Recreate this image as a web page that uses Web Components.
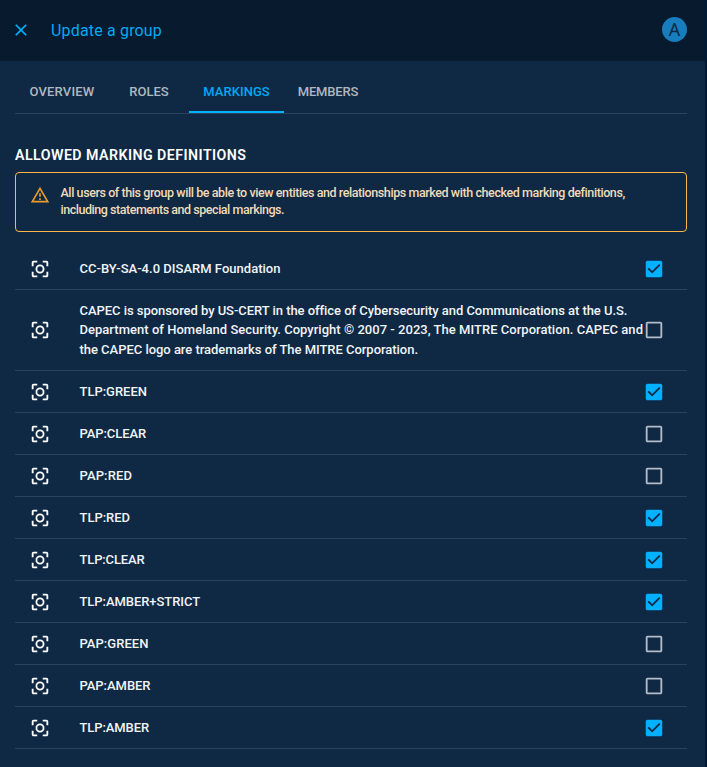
<!DOCTYPE html>
<html lang="en">
<head>
<meta charset="utf-8">
<title>Update a group</title>
<style>
html, body { margin: 0; height: 100%; overflow: hidden; background: #001a35; font-family: Roboto, "Noto Sans", sans-serif; }
</style>
</head>
<body>
<group-drawer></group-drawer>
<script>
const define = (name, html, setup) => customElements.define(name, class extends HTMLElement {
  connectedCallback() {
    if (this.shadowRoot) return;
    const root = this.attachShadow({ mode: 'open' });
    const template = document.createElement('template');
    template.innerHTML = html;
    root.append(template.content.cloneNode(true));
    if (setup) setup(this, root);
  }
});

// A single line of text whose tracking is set so that it fills its measure.
define('tracked-text', `<style>
  :host { display: block; white-space: nowrap; width: max-content; }
  span { display: inline-block; white-space: pre; }
</style><span></span>`, (host, root) => {
  const span = root.querySelector('span');
  span.textContent = host.getAttribute('text');
  const gap = Number(host.getAttribute('measure')) - span.getBoundingClientRect().width;
  span.style.letterSpacing = (gap / span.textContent.length) + 'px';
});

define('close-icon', `<style>:host { display: block; } svg { display: block; }</style>
<svg width="20" height="20" viewBox="0 0 24 24" fill="#00b1ff"><path d="M19 6.41 17.59 5 12 10.59 6.41 5 5 6.41 10.59 12 5 17.59 6.41 19 12 13.41 17.59 19 19 17.59 13.41 12z"/></svg>`);

define('warning-icon', `<style>:host { display: block; } svg { display: block; }</style>
<svg width="20" height="20" viewBox="0 0 24 24" fill="#ffa726" fill-opacity=".9"><path d="M12 5.99 19.53 19H4.47L12 5.99M12 2 1 21h22L12 2zm1 14h-2v2h2v-2zm0-6h-2v4h2v-4z"/></svg>`);

define('marking-icon', `<style>:host { display: block; } svg { display: block; }</style>
<svg width="22" height="22" viewBox="0 0 24 24" fill="#fff"><path d="M5 15H3v4c0 1.100.9 2 2 2h4v-2H5v-4zM5 5h4V3H5c-1.100 0-2 .9-2 2v4h2V5zm14-2h-4v2h4v4h2V5c0-1.100-.9-2-2-2zm0 16h-4v2h4c1.100 0 2-.9 2-2v-4h-2v4z"/><circle cx="12" cy="12" r="3.900" fill="none" stroke="#fff" stroke-width="2"/></svg>`);

define('check-box', `<style>:host { display: block; } svg { display: block; }
  .on, :host([checked]) .off { display: none; } :host([checked]) .on { display: block; }
</style>
<svg width="22" height="22" viewBox="0 0 24 24">
<path class="off" fill="#b4bdc7" d="M19 5v14H5V5h14m0-2H5c-1.100 0-2 .9-2 2v14c0 1.100.9 2 2 2h14c1.100 0 2-.9 2-2V5c0-1.100-.9-2-2-2z"/>
<path class="on" fill="#00b1ff" d="M19 3H5c-1.110 0-2 .9-2 2v14c0 1.100.89 2 2 2h14c1.110 0 2-.9 2-2V5c0-1.100-.89-2-2-2zm-9 14-5-5 1.410-1.410L10 14.170l7.590-7.590L19 8l-9 9z"/>
</svg>`);

define('drawer-header', `<style>
  :host { display: flex; align-items: center; box-sizing: border-box; height: 61px; padding: 0 18px 0 11px; background: #071a2e; color: #00a9f4; }
  close-icon { margin-bottom: 1px; }
  .title { margin-left: 20px; flex: 1; font-size: 16px; line-height: 24px; }
  .avatar { width: 25px; height: 25px; margin-bottom: 2px; border-radius: 50%; background: #187dbc; color: #0a2a47; display: grid; place-items: center; font-size: 18px; line-height: 25px; }
  .avatar span { font-family: "Noto Sans", sans-serif; font-weight: 400; }
</style>
<close-icon></close-icon><div class="title"><slot></slot></div><div class="avatar"><span>A</span></div>`);

define('nav-tab', `<style>
  :host { display: flex; box-sizing: border-box; justify-content: center; align-items: center; height: 45px; padding-top: 4px; color: #afb8c1; font-size: 13px; font-weight: 500; border-bottom: 2px solid transparent; }
  :host([active]) { color: #00a9f4; border-color: #00b1ff; }
</style><slot></slot>`);

define('tab-bar', `<style>
  :host { display: grid; grid-template-columns: 94px 80px 95px 88px; border-bottom: 1px solid #2b425c; padding-top: 7px; }
</style><slot></slot>`);

define('warning-alert', `<style>
  :host { display: flex; box-sizing: border-box; height: 60px; border: 1px solid #ffb547; border-radius: 4px; padding: 12px 15px 0 14px; gap: 10.500px; color: #eedbb9; font-size: 12.5px; font-weight: 500; line-height: 17px; }
  .message { margin-top: -1px; }
</style><warning-icon></warning-icon><div class="message"><slot></slot></div>`);

define('marking-row', `<style>
  :host { display: flex; align-items: center; box-sizing: border-box; height: 42px; padding: 0 22.500px 0 14px; border-bottom: 1px solid #2b425c; color: #f1f4f6; font-size: 13px; font-weight: 500; line-height: 19.5px; }
  :host([tall]) { height: 81px; }
  marking-icon { flex: none; }
  .label { flex: 1; margin-left: 28.500px; min-width: 0; }
  check-box { flex: none; }
</style><marking-icon></marking-icon><div class="label"></div><check-box></check-box>`, (host, root) => {
  const label = root.querySelector('.label');
  for (const [text, measure] of host.lines) {
    const line = document.createElement('tracked-text');
    line.setAttribute('text', text);
    line.setAttribute('measure', measure);
    label.append(line);
  }
  if (host.hasAttribute('checked')) root.querySelector('check-box').setAttribute('checked', '');
});

define('marking-list', `<style>:host { display: block; margin-top: 16px; }</style>`, (host, root) => {
  const rows = [
    [1, ['CC-BY-SA-4.0 DISARM Foundation', 201]],
    [0, ['CAPEC is sponsored by US-CERT in the office of Cybersecurity and Communications at the U.S.', 547],
        ['Department of Homeland Security. Copyright © 2007 - 2023, The MITRE Corporation. CAPEC and', 563.5],
        ['the CAPEC logo are trademarks of The MITRE Corporation.', 338.5]],
    [1, ['TLP:GREEN', 67.5]], [0, ['PAP:CLEAR', 66.5]], [0, ['PAP:RED', 52.5]],
    [1, ['TLP:RED', 50.5]], [1, ['TLP:CLEAR', 65]], [1, ['TLP:AMBER+STRICT', 120.5]],
    [0, ['PAP:GREEN', 69]], [0, ['PAP:AMBER', 71]], [1, ['TLP:AMBER', 69.5]]
  ];
  for (const [checked, ...lines] of rows) {
    const row = document.createElement('marking-row');
    row.lines = lines;
    row.toggleAttribute('checked', !!checked);
    row.toggleAttribute('tall', lines.length > 1);
    root.append(row);
  }
});

define('group-drawer', `<style>
  :host { display: block; height: 767px; margin-right: 2px; background: #0f2945; }
  main { padding: 0 18px 0 15px; }
  h2 { margin: 31px 0 6px; color: #fff; font-size: 14.2px; line-height: 21px; font-weight: 600; }
</style>
<drawer-header><tracked-text text="Update a group" measure="111"></tracked-text></drawer-header>
<main>
  <tab-bar>
    <nav-tab><tracked-text text="OVERVIEW" measure="65"></tracked-text></nav-tab>
    <nav-tab><tracked-text text="ROLES" measure="39.5"></tracked-text></nav-tab>
    <nav-tab active><tracked-text text="MARKINGS" measure="66.5"></tracked-text></nav-tab>
    <nav-tab><tracked-text text="MEMBERS" measure="60.5"></tracked-text></nav-tab>
  </tab-bar>
  <h2><tracked-text text="ALLOWED MARKING DEFINITIONS" measure="231.5"></tracked-text></h2>
  <warning-alert>
    <tracked-text text="All users of this group will be able to view entities and relationships marked with checked marking definitions," measure="564"></tracked-text>
    <tracked-text text="including statements and special markings." measure="223.5"></tracked-text>
  </warning-alert>
  <marking-list></marking-list>
</main>`);
</script>
</body>
</html>
